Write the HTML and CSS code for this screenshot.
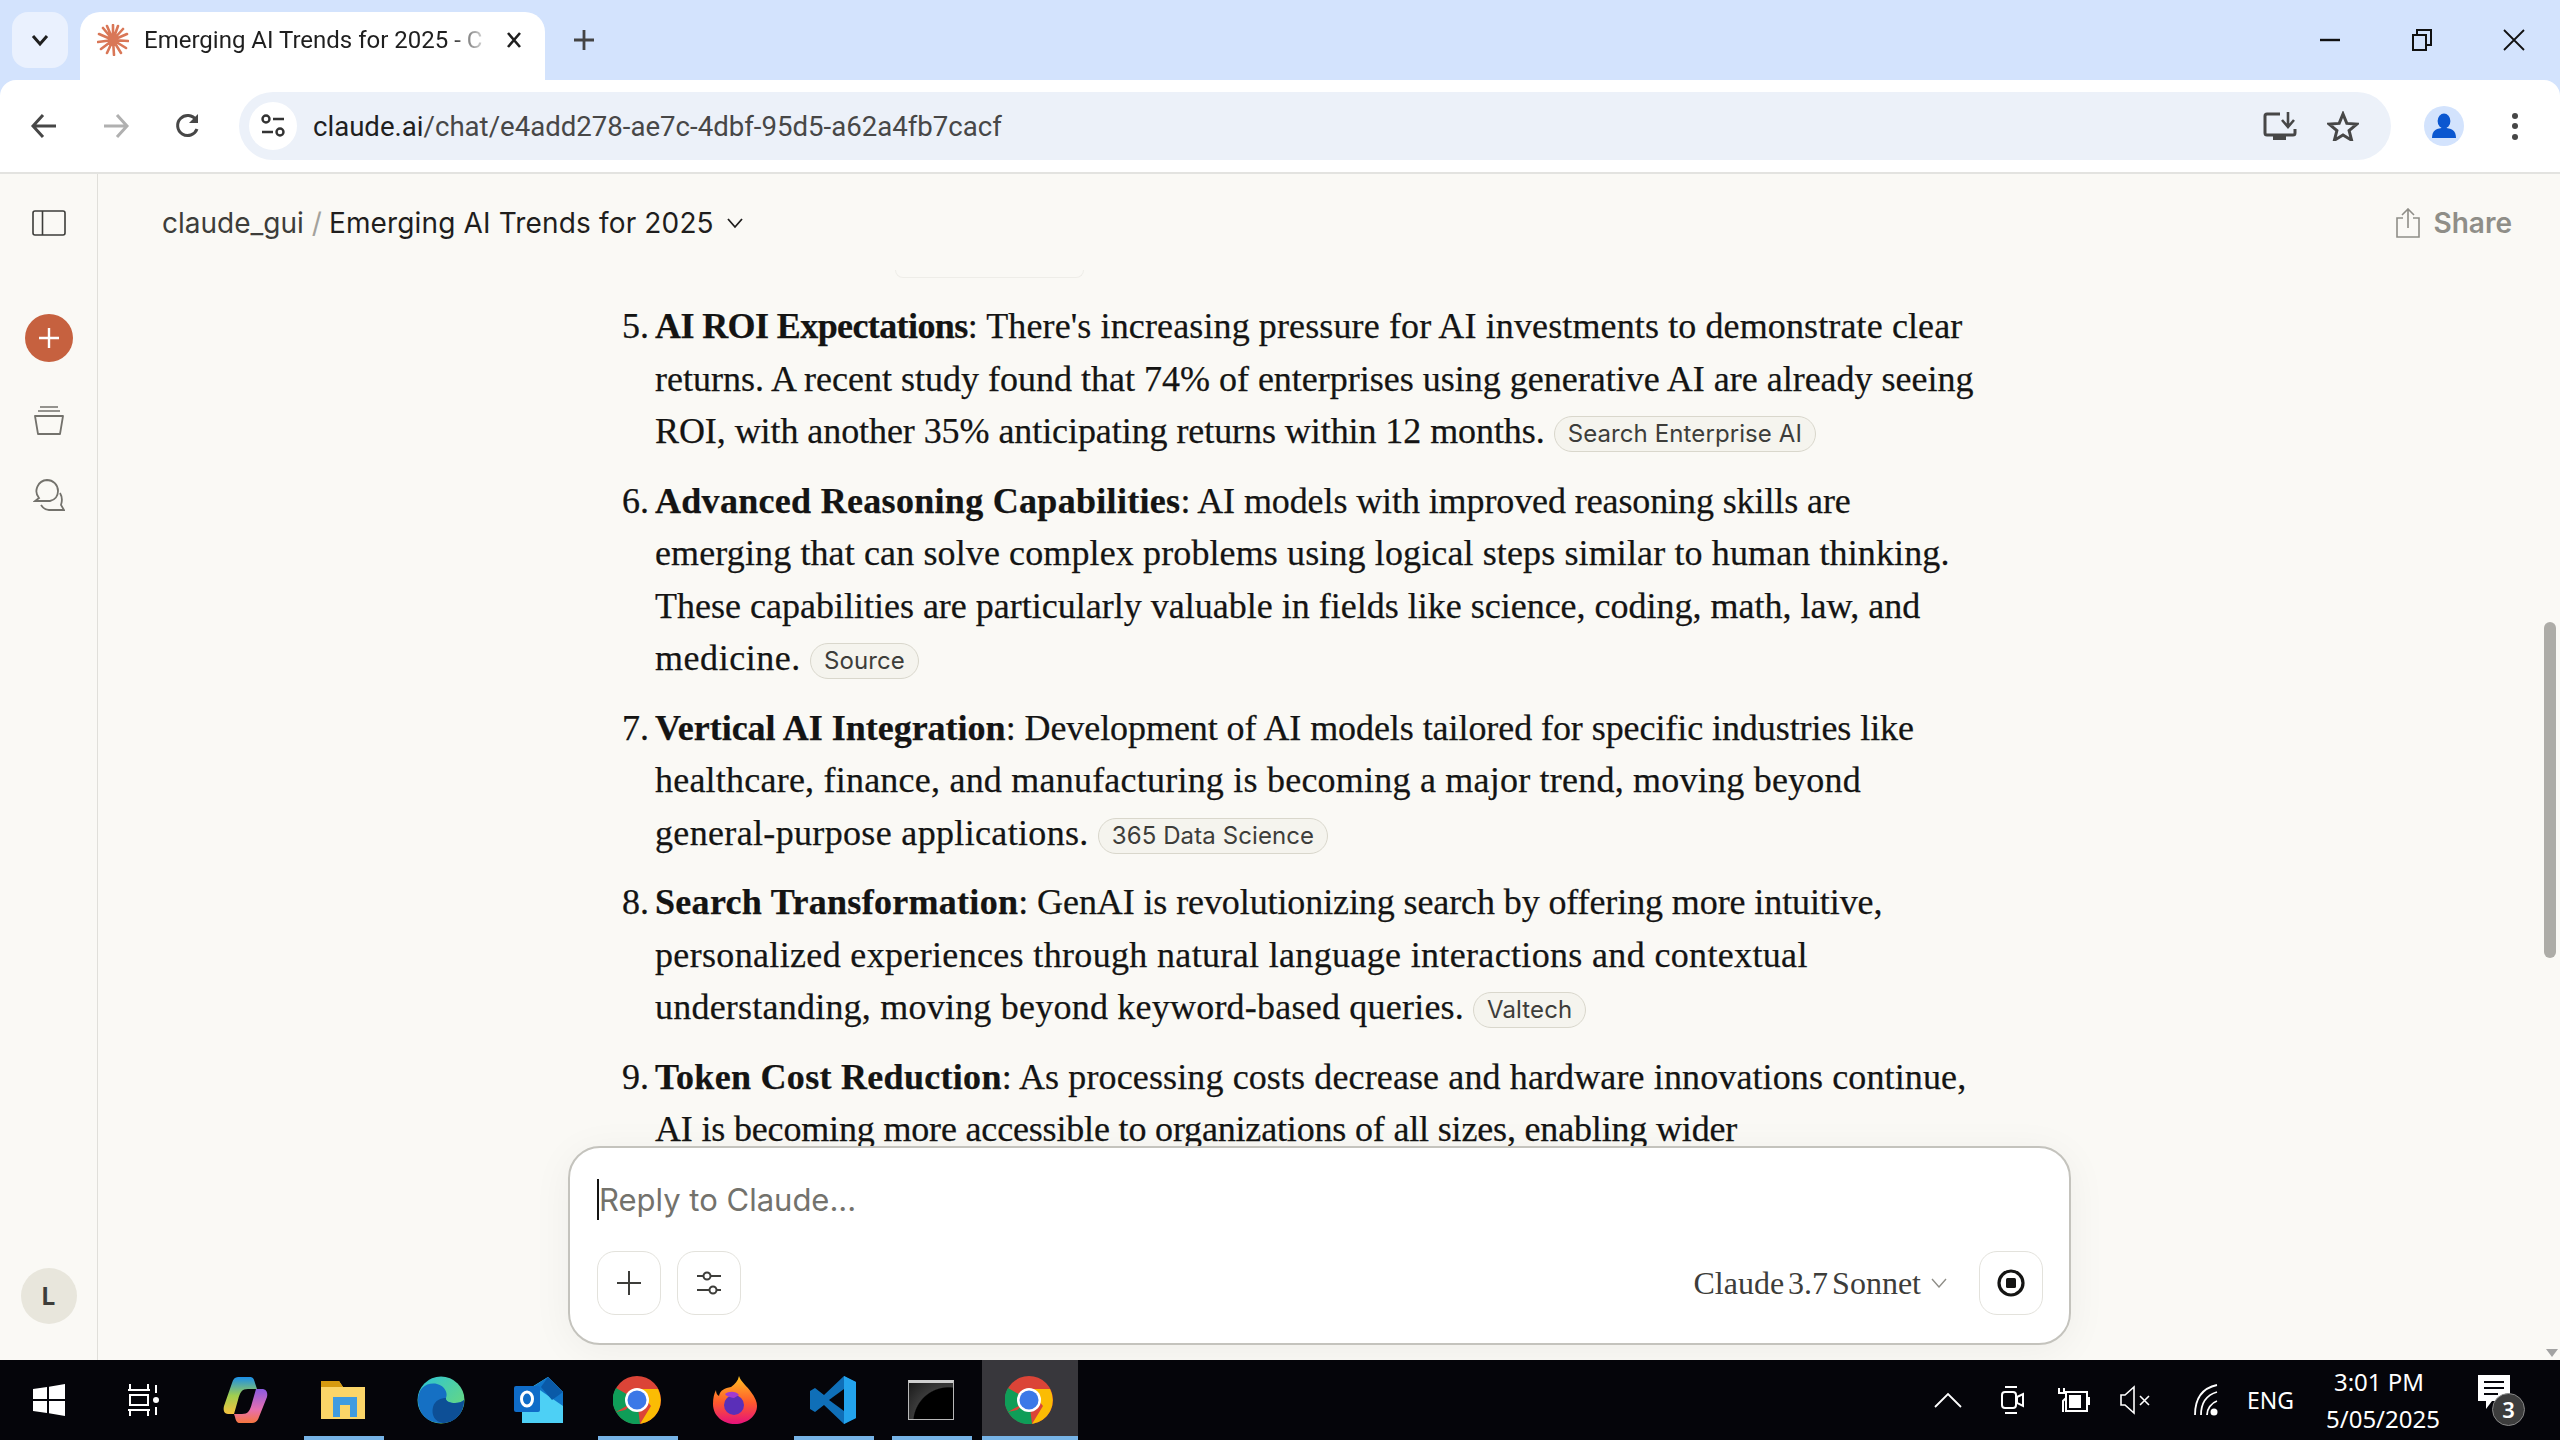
FILE: index.html
```html
<!DOCTYPE html>
<html>
<head>
<meta charset="utf-8">
<title>Emerging AI Trends for 2025 - Claude</title>
<link rel="stylesheet" href="styles.css">
</head>
<body>
<div class="screen">

  <!-- chrome tab strip -->
  <div class="tabstrip">
    <div class="tabsearch"><svg width="20" height="20" viewBox="0 0 20 20"><path d="M3 6l7 8 7-8" fill="none" stroke="#1f1f1f" stroke-width="3"/></svg></div>
    <div class="tab">
      <svg class="favicon" width="32" height="32" viewBox="0 0 32 32"><g stroke="#d97757" stroke-width="2.6" stroke-linecap="round"><path d="M16 16V1M16 16l5 -14M16 16l10 -11M16 16l14 -6M16 16l15 1M16 16l13 8M16 16l8 13M16 16l1 15M16 16l-6 13M16 16l-12 9M16 16L1 18M16 16L2 10M16 16L6 4M16 16L10 2"/></g></svg>
      <span class="tabtitle">Emerging AI Trends for 2025 - C</span>
      <svg class="tabclose" width="18" height="18" viewBox="0 0 18 18"><path d="M3 2l12 14M15 2L3 16" stroke="#1f1f1f" stroke-width="2.6"/></svg>
    </div>
    <svg class="newtab" width="22" height="22" viewBox="0 0 22 22"><path d="M11 1v20M1 11h20" stroke="#444" stroke-width="2.8"/></svg>
    <div class="spacer"></div>
    <div class="winbtn"><svg width="20" height="20" viewBox="0 0 20 20"><path d="M0 10h20" stroke="#111" stroke-width="2.4"/></svg></div>
    <div class="winbtn"><svg width="20" height="22" viewBox="0 0 20 22"><path d="M1 6h13v15H1zM5 6V1h14v15h-5" fill="none" stroke="#111" stroke-width="2"/></svg></div>
    <div class="winbtn"><svg width="22" height="22" viewBox="0 0 22 22"><path d="M1 1l20 20M21 1L1 21" stroke="#111" stroke-width="1.8"/></svg></div>
  </div>

  <!-- chrome toolbar -->
  <div class="toolbar">
    <svg class="navicon" width="28" height="26" viewBox="0 0 28 26"><path d="M26 13H4M13 2L3 13l10 11" fill="none" stroke="#474747" stroke-width="3"/></svg>
    <svg class="navicon" width="28" height="26" viewBox="0 0 28 26"><path d="M2 13h22M15 2l10 11-10 11" fill="none" stroke="#b0b0b0" stroke-width="3"/></svg>
    <svg class="navicon" width="28" height="28" viewBox="0 0 28 28"><path d="M23 17a10 10 0 1 1-1-9" fill="none" stroke="#474747" stroke-width="3"/><path d="M24 2v9h-9" fill="#474747"/></svg>
    <div class="omnibox">
      <div class="siteinfo"><svg width="26" height="26" viewBox="0 0 26 26"><circle cx="6" cy="6" r="3.5" fill="none" stroke="#333" stroke-width="2.4"/><path d="M13 6h11M2 19h11" stroke="#333" stroke-width="2.4"/><circle cx="20" cy="19" r="3.5" fill="none" stroke="#333" stroke-width="2.4"/></svg></div>
      <div class="url">claude.ai<span class="urlpath">/chat/e4add278-ae7c-4dbf-95d5-a62a4fb7cacf</span></div>
      <div class="spacer"></div>
      <svg class="omniicon" width="34" height="30" viewBox="0 0 34 30"><path d="M17 3H4a2 2 0 0 0-2 2v17a2 2 0 0 0 2 2h26a2 2 0 0 0 2-2v-4" fill="none" stroke="#474747" stroke-width="3"/><path d="M25 1v13M19 9l6 7 6-7" fill="none" stroke="#474747" stroke-width="2.6"/><path d="M10 24h13v5H10z" fill="#474747"/></svg>
      <svg class="omniicon" width="32" height="30" viewBox="0 0 32 30"><path d="M16 3l3.8 9.4 10 .7-7.7 6.4 2.5 9.7L16 24l-8.6 5.2 2.5-9.7-7.7-6.4 10-.7z" fill="none" stroke="#474747" stroke-width="3"/></svg>
    </div>
    <div class="avatar"><svg width="26" height="26" viewBox="0 0 26 26"><ellipse cx="13" cy="8" rx="6.4" ry="7.5" fill="#0b57d0"/><path d="M1 25c0-8 5-10 12-10s12 2 12 10z" fill="#0b57d0"/></svg></div>
    <svg class="kebab" width="8" height="28" viewBox="0 0 8 28"><circle cx="4" cy="4" r="3" fill="#474747"/><circle cx="4" cy="14" r="3" fill="#474747"/><circle cx="4" cy="25" r="3" fill="#474747"/></svg>
  </div>

  <!-- page -->
  <div class="page">
    <div class="sidebar">
      <svg class="sideicon panel" width="34" height="26" viewBox="0 0 34 26"><rect x="1" y="1" width="32" height="24" rx="2" fill="none" stroke="#3d3d3a" stroke-width="1.6"/><path d="M10.500 1v24" stroke="#3d3d3a" stroke-width="1.6"/></svg>
      <div class="newchat"><svg width="22" height="22" viewBox="0 0 22 22"><path d="M11 1v20M1 11h20" stroke="#fff" stroke-width="2.4"/></svg></div>
      <svg class="sideicon" width="32" height="30" viewBox="0 0 32 30"><path d="M2 11h28l-3 18H5z" fill="none" stroke="#73726c" stroke-width="1.8" stroke-linejoin="round"/><path d="M5 6h22M7 2h18" stroke="#73726c" stroke-width="1.6"/></svg>
      <svg class="sideicon" width="32" height="34" viewBox="0 0 32 34"><path d="M14 2a11 11 0 0 1 11 11c0 5-3 9-8 10H2l4-3a11 11 0 0 1 8-18z" fill="none" stroke="#73726c" stroke-width="1.8"/><path d="M27 15c3 5 2 9 1 12l3 5H16c-3 0-6-2-8-5" fill="none" stroke="#73726c" stroke-width="1.8"/></svg>
      <div class="spacer"></div>
      <div class="userbadge">L</div>
    </div>

    <div class="main">
      <div class="crumbs">
        <span class="crumbproject">claude_gui</span>
        <span class="crumbsep">/</span>
        <span class="crumbtitle">Emerging AI Trends for 2025</span>
        <svg class="crumbchev" width="18" height="12" viewBox="0 0 18 12"><path d="M2 2l7 8 7-8" fill="none" stroke="#1f1e1d" stroke-width="1.800"/></svg>
        <div class="spacer"></div>
        <div class="share">
          <svg width="26" height="30" viewBox="0 0 26 30"><path d="M8 10H2v19h22V10h-6M13 20V1M7 7l6-6 6 6" fill="none" stroke="#8f8e88" stroke-width="1.600"/></svg>
          <span>Share</span>
        </div>
      </div>
      <div class="fadedchip"></div>

      <div class="chat">
        <ol class="answer">
          <li><span class="w1"><b class="bold-tight">AI ROI Expectations</b>: There's increasing pressure for AI investments to demonstrate clear</span><br>returns. A recent study found that 74% of enterprises using generative AI are already seeing<br><span class="n1">ROI, with another 35% anticipating returns within 12 months.</span> <span class="chip">Search Enterprise AI</span></li>
          <li><span class="n2"><b class="bold-wide">Advanced Reasoning Capabilities</b>: AI models with improved reasoning skills are</span><br><span class="w1">emerging that can solve complex problems using logical steps similar to human thinking.</span><br>These capabilities are particularly valuable in fields like science, coding, math, law, and<br><span class="w5">medicine.</span> <span class="chip">Source</span></li>
          <li><span class="n1"><b>Vertical AI Integration</b>: Development of AI models tailored for specific industries like</span><br><span class="w2">healthcare, finance, and manufacturing is becoming a major trend, moving beyond</span><br><span class="w3">general-purpose applications.</span> <span class="chip">365 Data Science</span></li>
          <li><span class="n2"><b class="bold-wide">Search Transformation</b>: GenAI is revolutionizing search by offering more intuitive,</span><br><span class="w3">personalized experiences through natural language interactions and contextual</span><br><span class="w2">understanding, moving beyond keyword-based queries.</span> <span class="chip">Valtech</span></li>
          <li><span class="w1"><b class="bold-wide">Token Cost Reduction</b>: As processing costs decrease and hardware innovations continue,</span><br><span class="n3">AI is becoming more accessible to organizations of all sizes, enabling wider</span></li>
        </ol>
      </div>

      <div class="composer">
        <div class="inputline"><span class="caret"></span><span class="placeholder">Reply to Claude...</span></div>
        <div class="composerbar">
          <div class="cbtn"><svg width="24" height="24" viewBox="0 0 24 24"><path d="M12 0v24M0 12h24" stroke="#3d3d3a" stroke-width="2"/></svg></div>
          <div class="cbtn"><svg width="26" height="24" viewBox="0 0 26 24"><path d="M1 5h6M15 5h10M1 19h12M21 19h4" stroke="#3d3d3a" stroke-width="2.200"/><circle cx="11" cy="5" r="3.500" fill="none" stroke="#3d3d3a" stroke-width="2"/><circle cx="17" cy="19" r="3.500" fill="none" stroke="#3d3d3a" stroke-width="2"/></svg></div>
          <div class="spacer"></div>
          <div class="model">Claude 3.7 Sonnet</div>
          <svg class="modelchev" width="16" height="10" viewBox="0 0 16 10"><path d="M1 1l7 8 7-8" fill="none" stroke="#8f8e88" stroke-width="1.400"/></svg>
          <div class="cbtn record"><svg width="28" height="28" viewBox="0 0 28 28"><circle cx="14" cy="14" r="12" fill="none" stroke="#141413" stroke-width="3.200"/><rect x="9" y="9" width="10" height="10" rx="1.500" fill="#141413"/></svg></div>
        </div>
      </div>
    </div>

    <div class="scrollbar">
      <svg class="arrow" width="12" height="8" viewBox="0 0 12 8"><path d="M0 0h12L6 8z" fill="#a3a3a3"/></svg>
      <div class="thumb"></div>
    </div>
  </div>

  <!-- windows taskbar -->
  <div class="taskbar">
    <div class="tbitem"><svg width="32" height="32" viewBox="0 0 32 32"><path d="M0 5l14-2v12H0zM16 2.700L32 0v15H16zM0 17h14v12L0 27zM16 17h16v15l-16-2.700z" fill="#fff"/></svg></div>
    <div class="tbitem taskview"><svg width="32" height="32" viewBox="0 0 32 32"><path d="M1 6h22M1 26h22M3 11h18v10H3zM3 0v6M21 0v6M3 26v6M21 26v6M29 1v8M29 23v8" fill="none" stroke="#fff" stroke-width="2"/><circle cx="29" cy="16" r="3" fill="#fff"/></svg></div>
    <div class="tbitem"><svg width="46" height="48" viewBox="0 0 46 48"><defs><linearGradient id="cp1" x1="0" y1="0" x2="0" y2="1"><stop offset="0" stop-color="#1b8fe8"/><stop offset=".5" stop-color="#9fce4f"/><stop offset="1" stop-color="#f6c33f"/></linearGradient><linearGradient id="cp2" x1="0" y1="0" x2="0" y2="1"><stop offset="0" stop-color="#8a5ae0"/><stop offset=".6" stop-color="#e66fb0"/><stop offset="1" stop-color="#f6763f"/></linearGradient></defs><path d="M16 1h12c3 0 4 2 5 6l2 6H26C20 13 18 16 16 24L12 38H6C2 38 1 34 2 30L10 7C11 3 13 1 16 1z" fill="url(#cp1)"/><path d="M30 47H18c-3 0-4-2-5-6l-1-3h8c6 0 8-3 10-11l4-14h6c4 0 6 3 5 8l-8 20c-1 4-4 6-7 6z" fill="url(#cp2)"/></svg></div>
    <div class="tbitem active-app"><svg width="44" height="38" viewBox="0 0 44 38"><path d="M0 0h18l4 6h22v32H0z" fill="#fbd568"/><path d="M0 0h18l4 6H0z" fill="#d69a10"/><path d="M12 16h24v20h-7V24h-10v12h-7z" fill="#3f9be0"/></svg></div>
    <div class="tbitem"><svg width="48" height="48" viewBox="0 0 48 48"><defs><linearGradient id="ed1" x1="0" y1="0" x2="1" y2="1"><stop offset="0" stop-color="#2bc3d8"/><stop offset="1" stop-color="#75dc6c"/></linearGradient></defs><circle cx="24" cy="24" r="23.500" fill="url(#ed1)"/><path d="M1 24C1 12 10 6 20 8c8 2 11 9 9 14-1 3 4 5 9 5 4 0 7-1 9-3 0 14-10 23-23 23C10 47 1 37 1 24z" fill="#1570c4"/><path d="M26 47c-8-1-12-8-10-16 2-7 8-9 13-9-1 3 4 5 9 5 4 0 7-1 9-3 0 14-10 23-21 23z" fill="#0d4f96"/></svg></div>
    <div class="tbitem"><svg width="50" height="46" viewBox="0 0 50 46"><path d="M8 46V16L34 0l15 15v31z" fill="#4dd0f5"/><path d="M20 9L34 0l15 15v14z" fill="#1176c9"/><path d="M34 0l15 15-11 8-11-13z" fill="#0a5aa8"/><rect x="0" y="9" width="26" height="26" rx="2" fill="#0f6cc8"/><ellipse cx="13" cy="22" rx="5.500" ry="7" fill="none" stroke="#fff" stroke-width="3"/></svg></div>
    <div class="tbitem active-app"><svg width="48" height="48" viewBox="0 0 48 48"><circle cx="24" cy="24" r="24" fill="#db4437"/><path d="M24 24L3 36A24 24 0 0 1 3 12z" fill="#0f9d58"/><path d="M3 36l9-2 12-10 3 24A24 24 0 0 1 3 36z" fill="#0f9d58"/><path d="M24 13h21a24 24 0 0 1-18 35L38 30z" fill="#fbbc04"/><circle cx="24" cy="24" r="12" fill="#fff"/><circle cx="24" cy="24" r="9.500" fill="#3b78e7"/></svg></div>
    <div class="tbitem"><svg width="44" height="48" viewBox="0 0 44 48"><defs><linearGradient id="ff1" x1="0" y1="0" x2="0" y2="1"><stop offset="0" stop-color="#ffc222"/><stop offset=".55" stop-color="#ff5a2c"/><stop offset="1" stop-color="#e6117c"/></linearGradient></defs><path d="M26 0c2 6 8 10 12 16 4 5 6 10 6 14 0 10-10 18-22 18S0 40 0 28c0-6 1-10 3-14 0 3 1 5 3 6 1-6 6-8 12-9 4-3 7-6 8-11z" fill="url(#ff1)"/><circle cx="21" cy="29" r="10" fill="#5a2fb8"/><path d="M12 18c4-3 11-3 14 1l-5 3c-4-1-7-1-9-4z" fill="#a13bd0"/></svg></div>
    <div class="tbitem active-app"><svg width="46" height="48" viewBox="0 0 46 48"><path d="M34 0l12 6v36l-12 6-20-19-9 7-5-3V15l5-3 9 7z" fill="#0f6fb8"/><path d="M34 0l12 6v36l-12 6z" fill="#23a3ec"/><path d="M34 13L19 24l15 11z" fill="#05050a"/></svg></div>
    <div class="tbitem active-app"><div class="cmdicon"></div></div>
    <div class="tbitem active-app current"><svg width="48" height="48" viewBox="0 0 48 48"><circle cx="24" cy="24" r="24" fill="#db4437"/><path d="M24 24L3 36A24 24 0 0 1 3 12z" fill="#0f9d58"/><path d="M3 36l9-2 12-10 3 24A24 24 0 0 1 3 36z" fill="#0f9d58"/><path d="M24 13h21a24 24 0 0 1-18 35L38 30z" fill="#fbbc04"/><circle cx="24" cy="24" r="12" fill="#fff"/><circle cx="24" cy="24" r="9.500" fill="#3b78e7"/></svg></div>
    <div class="spacer"></div>
    <div class="tray">
      <svg class="t-chev" width="28" height="16" viewBox="0 0 28 16"><path d="M1 15L14 2l13 13" fill="none" stroke="#fff" stroke-width="1.800"/></svg>
      <svg class="t-cam" width="24" height="30" viewBox="0 0 24 30"><path d="M4 2h12M4 28h12" stroke="#fff" stroke-width="1.800"/><rect x="1" y="7" width="14" height="16" rx="3" fill="none" stroke="#fff" stroke-width="2"/><path d="M16 12l6-3v12l-6-3z" fill="none" stroke="#fff" stroke-width="2"/></svg>
      <svg class="t-batt" width="32" height="26" viewBox="0 0 32 26"><rect x="8" y="5" width="21" height="19" fill="none" stroke="#fff" stroke-width="2"/><rect x="11" y="8" width="12" height="13" fill="#fff"/><path d="M29 10h3v8h-3z" fill="#fff"/><path d="M1 1v5M6 1v5M0 6h8v5l-3 3v11" fill="none" stroke="#fff" stroke-width="2"/></svg>
      <svg class="t-vol" width="30" height="30" viewBox="0 0 30 30"><path d="M1 10h4l9-8v26l-9-8H1z" fill="none" stroke="#fff" stroke-width="1.600"/><path d="M20 11l9 9M29 11l-9 9" stroke="#fff" stroke-width="1.600"/></svg>
      <svg class="t-wifi" width="26" height="32" viewBox="0 0 26 32"><path d="M2 31C2 14 10 4 24 1M8 31C8 19 14 11 24 8M14 31c0-6 4-12 10-14" fill="none" stroke="#fff" stroke-width="1.800"/><circle cx="21" cy="28" r="3.500" fill="#fff"/></svg>
      <div class="t-lang">ENG</div>
      <div class="t-clock"><div>3:01 PM</div><div>5/05/2025</div></div>
      <div class="t-notif">
        <svg width="32" height="36" viewBox="0 0 32 36"><path d="M0 0h32v26H14l-6 8v-8H0z" fill="#fff"/><path d="M6 7h20M6 13h20M6 19h14" stroke="#05050a" stroke-width="2"/></svg>
        <span class="t-badge">3</span>
      </div>
    </div>
  </div>
</div>
</body>
</html>
```

FILE: styles.css
```css
html, body {
	margin: 0;
	padding: 0;
	overflow: hidden;
}
svg {
	display: block;
	flex: none;
}
.screen {
	width: 2560px;
	height: 1440px;
	display: flex;
	flex-direction: column;
	overflow: hidden;
	background: #d3e3fd;
}
.spacer {
	flex: 1;
}

/* tab strip */
.tabstrip {
	height: 80px;
	flex: none;
	display: flex;
	align-items: flex-start;
	padding-left: 12px;
	padding-top: 12px;
	box-sizing: border-box;
	font-family: "Roboto", sans-serif;
}
.tabsearch {
	width: 56px;
	height: 56px;
	border-radius: 16px;
	background: #eaf1fe;
	display: flex;
	align-items: center;
	justify-content: center;
	margin-right: 12px;
}
.tab {
	width: 465px;
	height: 68px;
	background: #fff;
	border-radius: 20px 20px 0 0;
	display: flex;
	align-items: center;
	padding: 0 22px 12px 17px;
	box-sizing: border-box;
}
.favicon {
	margin-right: 15px;
}
.tabtitle {
	flex: 1;
	font-size: 24px;
	color: #1f1f1f;
	white-space: nowrap;
	-webkit-mask-image: linear-gradient(to right, #000 88%, transparent 100%);
	mask-image: linear-gradient(to right, #000 88%, transparent 100%);
}
.tabclose {
	margin-left: 14px;
}
.newtab {
	margin: 17px 0 0 28px;
}
.winbtn {
	width: 92px;
	height: 56px;
	display: flex;
	align-items: center;
	justify-content: center;
}

/* toolbar */
.toolbar {
	height: 92px;
	flex: none;
	background: #fff;
	border-radius: 16px 16px 0 0;
	display: flex;
	align-items: center;
	padding-left: 30px;
	box-sizing: border-box;
	font-family: "Roboto", sans-serif;
}
.navicon {
	margin-right: 44px;
}
.omnibox {
	width: 2152px;
	height: 68px;
	margin-left: -7px;
	border-radius: 34px;
	background: #ecf1f9;
	display: flex;
	align-items: center;
	padding: 0 32px 0 10px;
	box-sizing: border-box;
}
.siteinfo {
	width: 48px;
	height: 48px;
	border-radius: 50%;
	background: #fff;
	display: flex;
	align-items: center;
	justify-content: center;
	margin-right: 16px;
}
.url {
	font-size: 27.600px;
	color: #1f1f1f;
}
.urlpath {
	color: #474747;
}
.omniicon {
	margin-left: 30px;
}
.avatar {
	width: 40px;
	height: 40px;
	border-radius: 50%;
	background: #d3e3fd;
	margin-left: 33px;
	display: flex;
	align-items: center;
	justify-content: center;
}
.kebab {
	margin-left: 47px;
}

/* page */
.page {
	flex: 1;
	min-height: 0;
	display: flex;
	background: #faf9f5;
	border-top: 2px solid #e3e3e0;
	position: relative;
}
.sidebar {
	width: 98px;
	flex: none;
	border-right: 1px solid #e0dfda;
	box-sizing: border-box;
	display: flex;
	flex-direction: column;
	align-items: center;
	padding: 36px 0 36px;
}
.sideicon {
	margin-bottom: 43px;
}
.sideicon.panel {
	margin-bottom: 78px;
}
.newchat {
	width: 48px;
	height: 48px;
	border-radius: 50%;
	background: #c6613f;
	display: flex;
	align-items: center;
	justify-content: center;
	margin-bottom: 43px;
}
.userbadge {
	width: 56px;
	height: 56px;
	border-radius: 50%;
	background: #e8e6dc;
	color: #3d3d3a;
	font-family: "Inter", sans-serif;
	font-weight: 700;
	font-size: 24px;
	display: flex;
	align-items: center;
	justify-content: center;
}
.main {
	flex: 1;
	min-width: 0;
	position: relative;
	overflow: hidden;
}
.crumbs {
	height: 98px;
	display: flex;
	align-items: center;
	padding: 0 48px 0 64px;
	font-family: "Inter", sans-serif;
	font-size: 28px;
	color: #1f1e1d;
}
.crumbproject {
	color: #3d3d3a;
}
.crumbsep {
	color: #a3a29c;
	margin: 0 7px 0 8px;
}
.crumbtitle {
	letter-spacing: 0.150px;
}
.crumbchev {
	margin-left: 12px;
}
.share {
	display: flex;
	align-items: center;
	gap: 13px;
	color: #8f8e88;
	font-weight: 600;
}
.fadedchip {
	position: absolute;
	left: 797px;
	top: 96px;
	width: 189px;
	height: 8px;
	border: 1px solid #eeede8;
	border-top: none;
	border-radius: 0 0 12px 12px;
	box-sizing: border-box;
}
.chat {
	padding-top: 28px;
	height: 930px;
	overflow: hidden;
}
.answer {
	margin: 0;
	padding: 0 0 0 557px;
	width: 1500px;
	box-sizing: border-box;
	font-family: "Liberation Serif", serif;
	font-size: 36px;
	line-height: 52.5px;
	color: #141413;
	-webkit-text-stroke: 0.250px #141413;
	white-space: nowrap;
	list-style: none;
	counter-reset: item 4;
}
.answer li {
	margin-bottom: 17px;
	counter-increment: item;
}
.answer li::before {
	content: counter(item) ".";
	display: inline-block;
	width: 54px;
	margin-left: -60px;
	margin-right: 6px;
	text-align: right;
}
.answer b {
	font-weight: 700;
	letter-spacing: 0;
}
.answer b.bold-tight {
	letter-spacing: -0.600px;
}
.answer b.bold-wide {
	letter-spacing: 0.300px;
}
/* line fit, the serif here runs a bit off the original one */
.n3 {
	letter-spacing: -0.170px;
}
.n2 {
	letter-spacing: -0.100px;
}
.n1 {
	letter-spacing: -0.070px;
}
.w1 {
	letter-spacing: 0.120px;
}
.w2 {
	letter-spacing: 0.220px;
}
.w3 {
	letter-spacing: 0.340px;
}
.w5 {
	letter-spacing: 0.550px;
}
.chip {
	display: inline-block;
	font-family: "Inter", sans-serif;
	font-size: 24px;
	line-height: 34px;
	letter-spacing: 0.100px;
	padding: 0 13px;
	border: 1px solid #d9d7cc;
	border-radius: 18px;
	color: #3d3d3a;
	background: #f5f4ee;
	vertical-align: 1px;
	-webkit-text-stroke: 0;
}

/* composer */
.composer {
	position: absolute;
	left: 470px;
	top: 972px;
	width: 1503px;
	height: 199px;
	box-sizing: border-box;
	background: #fff;
	border: 2px solid #c4c3bd;
	border-radius: 32px;
	box-shadow: 0 6px 40px rgba(0, 0, 0, 0.05);
	padding: 30px 26px 0 27px;
}
.inputline {
	display: flex;
	align-items: center;
	height: 42px;
	font-family: "Inter", sans-serif;
	font-size: 31px;
	color: #73726c;
}
.caret {
	width: 2px;
	height: 41px;
	background: #141413;
}
.composerbar {
	display: flex;
	align-items: center;
	gap: 16px;
	margin-top: 31px;
}
.cbtn {
	width: 64px;
	height: 64px;
	box-sizing: border-box;
	border: 1px solid #e3e2dc;
	border-radius: 18px;
	display: flex;
	align-items: center;
	justify-content: center;
}
.model {
	font-family: "Liberation Serif", serif;
	font-size: 32px;
	word-spacing: -4px;
	color: #3d3d3a;
}
.modelchev {
	margin-left: -6px;
}
.record {
	margin-left: 16px;
}

/* scrollbar */
.scrollbar {
	width: 0;
	position: relative;
}
.scrollbar .thumb {
	position: absolute;
	right: 4px;
	top: 448px;
	width: 12px;
	height: 336px;
	border-radius: 6px;
	background: #adaca7;
}
.scrollbar .arrow {
	position: absolute;
	right: 2px;
	bottom: 3px;
}

/* taskbar */
.taskbar {
	height: 80px;
	flex: none;
	background: #05050a;
	display: flex;
	align-items: stretch;
	font-family: "Noto Sans", sans-serif;
	color: #fff;
}
.tbitem {
	width: 98px;
	display: flex;
	align-items: center;
	justify-content: center;
	position: relative;
}
.taskview svg {
	margin-right: 8px;
}
.active-app::after {
	content: "";
	position: absolute;
	left: 10px;
	right: 8px;
	bottom: 0;
	height: 4px;
	background: #76b3e6;
}
.current {
	background: linear-gradient(#38373c, #38373c) no-repeat 2px 0 / 96px 100%;
}
.current::after {
	left: 2px;
	right: 0;
}
.cmdicon {
	width: 46px;
	height: 40px;
	border: 1px solid #b8b8b8;
	border-top: 3px solid #cfcfcf;
	box-sizing: border-box;
	background: radial-gradient(ellipse at 90% 110%, #000 62%, #3a3a3a 64%, #1a1a1a 100%);
}
.tray {
	display: flex;
	align-items: center;
	position: relative;
}
.t-chev {
	margin-right: 39px;
}
.t-cam {
	margin-right: 33px;
}
.t-batt {
	margin-right: 30px;
}
.t-vol {
	margin-right: 43px;
}
.t-wifi {
	margin-right: 28px;
}
.t-lang {
	font-size: 23px;
	margin-right: 32px;
}
.t-clock {
	width: 106px;
	text-align: center;
	font-size: 24px;
	line-height: 37px;
	white-space: nowrap;
	margin-right: 46px;
}
.t-notif {
	position: relative;
	width: 50px;
	height: 50px;
	margin-right: 32px;
}
.t-badge {
	position: absolute;
	left: 14px;
	top: 18px;
	width: 33px;
	height: 33px;
	border-radius: 50%;
	background: #3d3d3d;
	border: 1px solid #888;
	box-sizing: border-box;
	font-size: 22px;
	font-weight: 600;
	line-height: 30px;
	text-align: center;
}
```
